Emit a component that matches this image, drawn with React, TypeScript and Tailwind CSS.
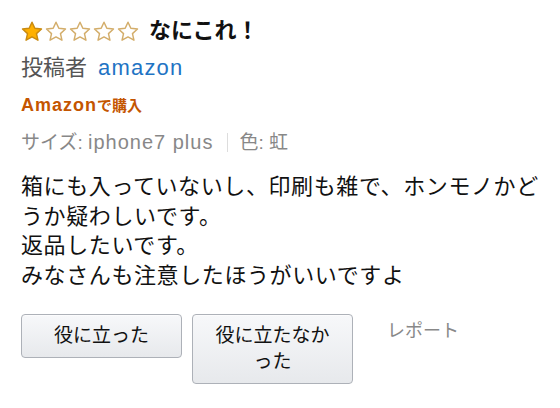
import React from 'react';

const FONT = '"Liberation Sans", "Noto Sans CJK JP", sans-serif';

const Star = ({ filled }: { filled: boolean }) => (
  <svg width="22" height="21" viewBox="0 0 24 23" className="block">
    <path
      d="M12 1.3l3.1 6.7 7.3.8-5.5 5 1.6 7.2L12 17.4l-6.5 3.6 1.6-7.2-5.5-5 7.3-.8z"
      fill={filled ? '#ffb000' : '#ffffff'}
      stroke={filled ? '#c98a10' : '#d3ad6a'}
      strokeWidth="1.6"
      strokeLinejoin="round"
    />
  </svg>
);

const ReviewButton = ({ children }: { children: React.ReactNode }) => (
  <button className="w-[161px] rounded-[4px] border border-[#adb1b8] bg-gradient-to-b from-[#f7f8fa] to-[#e7e9ec] px-[20px] py-[8px] text-[19px] leading-[26px] text-[#111] shadow-[0_1px_0_rgba(255,255,255,0.6)_inset]">
    {children}
  </button>
);

export default function App() {
  const rating = 1;

  return (
    <div className="h-[408px] w-[560px] bg-white pl-[21px] pt-[16px]" style={{ fontFamily: FONT }}>
      <div className="flex items-center gap-[10px]">
        <div className="flex gap-[2px]">
          {[0, 1, 2, 3, 4].map((i) => (
            <Star key={i} filled={i < rating} />
          ))}
        </div>
        <span className="text-[22px] font-bold leading-[30px] text-[#111]">なにこれ！</span>
      </div>

      <div className="mt-[8px] flex items-baseline gap-[11px] text-[22px] leading-[28px]">
        <span className="text-[#555]">投稿者</span>
        <span className="tracking-[1.2px] text-[#1f74c4]">amazon</span>
      </div>

      <div className="mt-[12px] flex items-baseline font-bold leading-[22px] text-[#c45500]">
        <span className="text-[18px] tracking-[1px]">Amazon</span>
        <span className="text-[15px]">で購入</span>
      </div>

      <div className="mt-[12px] flex items-center text-[19px] leading-[26px] text-[#888]">
        <span>
          サイズ: <span className="text-[20px] tracking-[1px]">iphone7 plus</span>
        </span>
        <span className="ml-[14px] mr-[11px] h-[19px] w-px bg-[#ddd]" />
        <span>色: 虹</span>
      </div>

      <p className="mt-[16px] w-[525px] text-[22px] leading-[29.5px] tracking-[0.6px] text-[#111]">
        箱にも入っていないし、印刷も雑で、ホンモノかどうか疑わしいです。
        <br />
        返品したいです。
        <br />
        みなさんも注意したほうがいいですよ
      </p>

      <div className="mt-[24px] flex items-start gap-[10px]">
        <ReviewButton>役に立った</ReviewButton>
        <ReviewButton>役に立たなかった</ReviewButton>
        <span className="ml-[24px] mt-[5px] text-[18px] leading-[24px] text-[#888]">レポート</span>
      </div>
    </div>
  );
}
